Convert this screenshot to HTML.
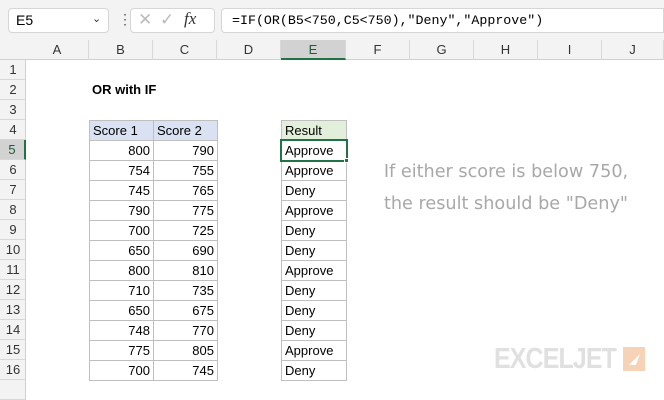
<!DOCTYPE html>
<html><head><style>
body{margin:0;width:664px;height:400px;overflow:hidden;background:#fff;font-family:"Liberation Sans",sans-serif;position:relative}
.a{position:absolute;box-sizing:border-box}
.t{font-size:13px;line-height:20px;color:#000}
</style></head><body>
<div class="a" style="left:0;top:0;width:664px;height:40px;background:#f3f3f3"></div>
<div class="a" style="left:8px;top:8px;width:101px;height:25px;background:#fff;border:1px solid #d6d6d6;border-radius:4px;font-size:14px;line-height:23px;padding-left:7px">E5</div>
<div class="a" style="left:92px;top:12px;font-size:11px;color:#333">&#8964;</div>
<div class="a" style="left:118px;top:11px;font-size:14px;color:#555">&#8942;</div>
<div class="a" style="left:130px;top:8px;width:85px;height:25px;background:#fff;border:1px solid #d6d6d6;border-radius:4px"></div>
<div class="a" style="left:138px;top:10px;font-size:17px;color:#bbb">&#10005;</div>
<div class="a" style="left:160px;top:10px;font-size:17px;color:#bbb">&#10003;</div>
<div class="a" style="left:184px;top:9px;font-size:17px;font-style:italic;font-family:'Liberation Serif',serif;color:#333">fx</div>
<div class="a" style="left:221px;top:8px;width:443px;height:25px;background:#fff;border:1px solid #d6d6d6;border-radius:4px 0 0 4px;font-family:'Liberation Mono',monospace;font-size:13.3px;line-height:23px;padding-left:10px">=IF(OR(B5&lt;750,C5&lt;750),"Deny","Approve")</div>
<div class="a" style="left:0;top:40px;width:664px;height:20px;background:#f3f3f3;border-bottom:1px solid #d0d0d0"></div>
<div class="a" style="left:0;top:60px;width:26px;height:340px;background:#f3f3f3;border-right:1px solid #d0d0d0"></div>
<div id="g"></div>
<div class="a t" style="left:92px;top:80px;font-weight:bold">OR with IF</div>
<div class="a" style="left:356px;top:156px;width:300px;text-align:center;font-family:'DejaVu Sans',sans-serif;font-size:18px;line-height:32px;color:#a8a8a8;transform:scaleX(0.98);transform-origin:center">If either score is below 750,<br>the result should be "Deny"</div>
<div class="a" style="left:494px;top:343px;font-size:29px;font-weight:bold;color:#e0e0e0;letter-spacing:-1px;transform:scaleX(0.86);transform-origin:left">EXCELJET</div>
<div class="a" style="left:623px;top:347px;width:22px;height:24px;background:#f6d2b6"></div>
<svg class="a" style="left:623px;top:347px" width="22" height="24"><path d="M6 18 L17 7 L13 18 Z" fill="#fff"/></svg>
<script>
var cols=[26,89,153,217,281,346,410,474,538,602,664],L="ABCDEFGHIJ",h="";
for(var i=0;i<10;i++){h+='<div class="a" style="left:'+cols[i]+'px;top:40px;width:'+(cols[i+1]-cols[i])+'px;height:20px;text-align:center;font-size:13px;line-height:20px;color:#333;border-right:1px solid #d8d8d8;'+(i==4?'background:#d2d2d2;border-bottom:2px solid #217346;color:#1d5c3a':'')+'">'+L[i]+'</div>';}
for(var r=1;r<=17;r++){var y=60+(r-1)*20;h+='<div class="a" style="left:0;top:'+y+'px;width:26px;height:20px;text-align:center;font-size:13px;line-height:20px;color:#333;border-bottom:1px solid #d8d8d8;'+(r==5?'background:#d2d2d2;border-right:2px solid #217346;color:#1d5c3a':'')+'">'+(r<17?r:'')+'</div>';}
var d=[[800,790,"Approve"],[754,755,"Approve"],[745,765,"Deny"],[790,775,"Approve"],[700,725,"Deny"],[650,690,"Deny"],[800,810,"Approve"],[710,735,"Deny"],[650,675,"Deny"],[748,770,"Deny"],[775,805,"Approve"],[700,745,"Deny"]];
function c(x,y,w,t,s){return '<div class="a t" style="left:'+x+'px;top:'+y+'px;width:'+(w+1)+'px;height:21px;border:1px solid #bfbfbf;padding:0 3px;'+s+'">'+t+'</div>';}
h+=c(89,120,64,"Score 1","background:#d9e1f2")+c(153,120,64,"Score 2","background:#d9e1f2")+c(281,120,65,"Result","background:#e2efda");
for(var k=0;k<12;k++){var y=140+k*20;h+=c(89,y,64,d[k][0],"text-align:right")+c(153,y,64,d[k][1],"text-align:right")+c(281,y,65,d[k][2],"");}
h+='<div class="a" style="left:280px;top:139px;width:68px;height:23px;border:2px solid #217346"></div><div class="a" style="left:344px;top:158px;width:5px;height:5px;background:#217346;border:1px solid #fff"></div>';
document.getElementById("g").innerHTML=h;
</script>
</body></html>
